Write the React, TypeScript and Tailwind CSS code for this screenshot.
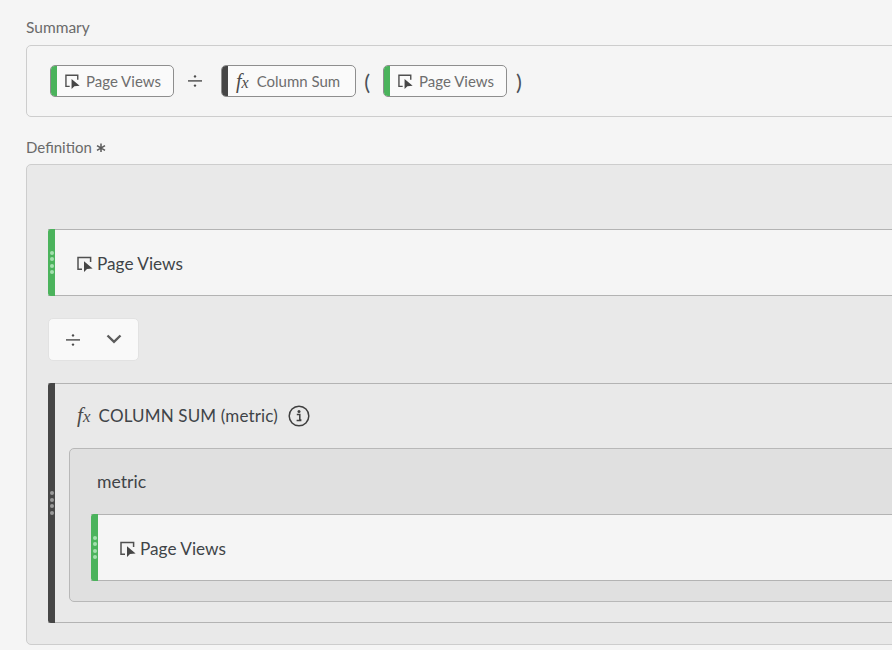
import React from 'react';

const FONT = "font-['Lato','Open_Sans',sans-serif]";

const MetricIcon = ({ size = 16 }: { size?: number }) => (
  <svg width={size} height={size} viewBox="0 0 16 16" className="shrink-0">
    <path d="M5 13.2H1V1.4H13.6V6" fill="none" stroke="#505050" strokeWidth="1.5" />
    <path d="M7 5.2V16L10 13L15.6 12.4Z" fill="#464646" />
  </svg>
);

const FxIcon = ({ className }: { className: string }) => (
  <span className={"font-['Liberation_Serif',serif] italic text-[#4b4b4b] shrink-0 " + className}>
    f<span className="text-[0.8em]">x</span>
  </span>
);

const Divide = () => (
  <svg width="14" height="12" viewBox="0 0 14 12" className="shrink-0">
    <rect x="0" y="5.2" width="14" height="1.4" fill="#4b4b4b" />
    <circle cx="7" cy="1.4" r="1.2" fill="#4b4b4b" />
    <circle cx="7" cy="10.6" r="1.2" fill="#4b4b4b" />
  </svg>
);

const Chip = ({ bar, children }: { bar: string; children: React.ReactNode }) => (
  <div className="flex h-8 items-stretch overflow-hidden rounded-[5px] border border-[#8e8e8e] bg-[#fafafa]">
    <div className={'w-[6px] shrink-0 ' + bar} />
    <div className="flex items-center gap-[6px] pl-[8px] pr-[12px] text-[15px] text-[#6e6e6e]">{children}</div>
  </div>
);

const Dots = ({ color }: { color: string }) => (
  <div className="flex flex-col gap-[2.6px]">
    {[0, 1, 2, 3].map((i) => (
      <div key={i} className={'h-1 w-1 rounded-full ' + color} />
    ))}
  </div>
);

const MetricRow = () => (
  <div className="flex h-[67px] items-stretch border border-l-0 border-[#b3b3b3] bg-[#f5f5f5]">
    <div className="-my-px flex w-[7px] shrink-0 items-center justify-center rounded-l-[3px] bg-[#4bb35c]">
      <Dots color="bg-[#a3e0ae]" />
    </div>
    <div className="flex items-center gap-[4px] pl-[22px] pt-[2px] text-[17.2px] text-[#3f4448]">
      <MetricIcon />
      Page Views
    </div>
  </div>
);

export default function App() {
  return (
    <div className={'h-[650px] w-[892px] overflow-hidden bg-[#f5f5f5] pl-[26px] ' + FONT}>
      <div className="w-[1000px]">
        <div className="pt-[18px] text-[15.5px] leading-[18px] text-[#6a6a6a]">Summary</div>

        <div className="mt-[9px] flex h-[72px] items-center rounded-[5px] border border-[#cdcdcd] bg-[#f5f5f5] pl-[23px]">
          <Chip bar="bg-[#4bb35c]">
            <MetricIcon size={15} />
            Page Views
          </Chip>
          <div className="ml-[14px] mr-[19px]">
            <Divide />
          </div>
          <Chip bar="bg-[#464646]">
            <FxIcon className="pr-[1px] text-[20px]" />
            <span className="pl-[1px] pr-[3px]">Column Sum</span>
          </Chip>
          <span className="ml-[8px] mr-[13px] text-[22px] text-[#4a5058]">(</span>
          <Chip bar="bg-[#4bb35c]">
            <MetricIcon size={15} />
            Page Views
          </Chip>
          <span className="ml-[9px] text-[22px] text-[#4a5058]">)</span>
        </div>

        <div className="mt-[21px] flex items-center gap-[4px] text-[15px] leading-[18px] text-[#6a6a6a]">
          Definition
          <svg width="10" height="10" viewBox="0 0 10 10" className="mt-[1px]">
            <path d="M5 0.5V9M1 2.6L9 7.4M9 2.6L1 7.4" stroke="#5a5a5a" strokeWidth="1.5" />
          </svg>
        </div>

        <div className="mt-[8px] h-[481px] rounded-[5px] border border-[#cdcdcd] bg-[#e9e9e9] pl-[21px] pt-[64px]">
          <MetricRow />

          <div className="mt-[22px] flex h-[43px] w-[91px] items-center rounded-[5px] border border-[#e2e2e2] bg-[#f9f9f9] pl-[17px]">
            <Divide />
            <svg width="16" height="16" viewBox="0 0 16 16" className="ml-[26px]">
              <path d="M1.5 3.5L8 9.8L14.5 3.5" fill="none" stroke="#5c5c5c" strokeWidth="2.4" />
            </svg>
          </div>

          <div className="mt-[22px] flex h-[240px] border border-l-0 border-[#b3b3b3] bg-[#e9e9e9]">
            <div className="-my-px flex w-[7px] shrink-0 items-center justify-center rounded-l-[3px] bg-[#464646]">
              <Dots color="bg-[#9a9a9a]" />
            </div>
            <div className="flex-1">
              <div className="flex h-[64px] items-center pl-[22px] text-[17px] tracking-[0.15px] text-[#3f4448]">
                <FxIcon className="mr-[8px] text-[21px]" />
                COLUMN SUM (metric)
                <svg width="22" height="22" viewBox="0 0 22 22" className="ml-[10px]">
                  <circle cx="11" cy="11" r="9.8" fill="none" stroke="#3f3f3f" strokeWidth="1.5" />
                  <circle cx="11" cy="6.6" r="1.5" fill="#3f3f3f" />
                  <path d="M8.8 9.6H11.8V15H13.4M8.6 15.6H13.4" fill="none" stroke="#3f3f3f" strokeWidth="1.5" />
                </svg>
              </div>
              <div className="ml-[14px] h-[154px] rounded-[5px] border border-[#b8b8b8] bg-[#e0e0e0] pl-[21px]">
                <div className="flex h-[67px] items-center pl-[6px] text-[17.6px] text-[#3f4448]">metric</div>
                <div className="-mt-[2px]">
                  <MetricRow />
                </div>
              </div>
            </div>
          </div>
        </div>
      </div>
    </div>
  );
}
